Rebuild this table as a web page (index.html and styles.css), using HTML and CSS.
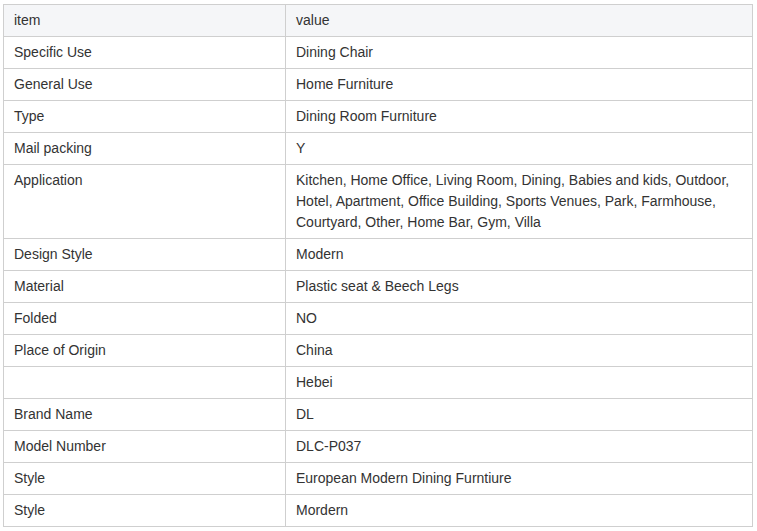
FILE: index.html
```html
<!DOCTYPE html>
<html>
<head>
<meta charset="utf-8">
<link rel="stylesheet" href="styles.css">
</head>
<body>
<table class="spec">
  <colgroup><col class="c1"><col class="c2"></colgroup>
  <thead>
    <tr><td>item</td><td>value</td></tr>
  </thead>
  <tbody>
    <tr><td>Specific Use</td><td>Dining Chair</td></tr>
    <tr><td>General Use</td><td>Home Furniture</td></tr>
    <tr><td>Type</td><td>Dining Room Furniture</td></tr>
    <tr><td>Mail packing</td><td>Y</td></tr>
    <tr><td>Application</td><td>Kitchen, Home Office, Living Room, Dining, Babies and kids, Outdoor, Hotel, Apartment, Office Building, Sports Venues, Park, Farmhouse, Courtyard, Other, Home Bar, Gym, Villa</td></tr>
    <tr><td>Design Style</td><td>Modern</td></tr>
    <tr><td>Material</td><td>Plastic seat &amp; Beech Legs</td></tr>
    <tr><td>Folded</td><td>NO</td></tr>
    <tr><td>Place of Origin</td><td>China</td></tr>
    <tr><td></td><td>Hebei</td></tr>
    <tr><td>Brand Name</td><td>DL</td></tr>
    <tr><td>Model Number</td><td>DLC-P037</td></tr>
    <tr><td>Style</td><td>European Modern Dining Furntiure</td></tr>
    <tr><td>Style</td><td>Mordern</td></tr>
  </tbody>
</table>
</body>
</html>
```
FILE: styles.css
```css
html, body {
  margin: 0;
  background: #fff;
}
body {
  padding: 4px 0 0 3px;
  font-family: "Liberation Sans", Arial, sans-serif;
  font-size: 14px;
  color: #333;
}
.spec {
  border-collapse: collapse;
  width: 750px;
  table-layout: fixed;
}
.spec .c1 { width: 282px; }
.spec td {
  border: 1px solid #cfcfcf;
  padding: 5px 10px;
  line-height: 21px;
  height: 21px;
  vertical-align: top;
}
.spec thead td {
  background: #f5f6f8;
}
```
